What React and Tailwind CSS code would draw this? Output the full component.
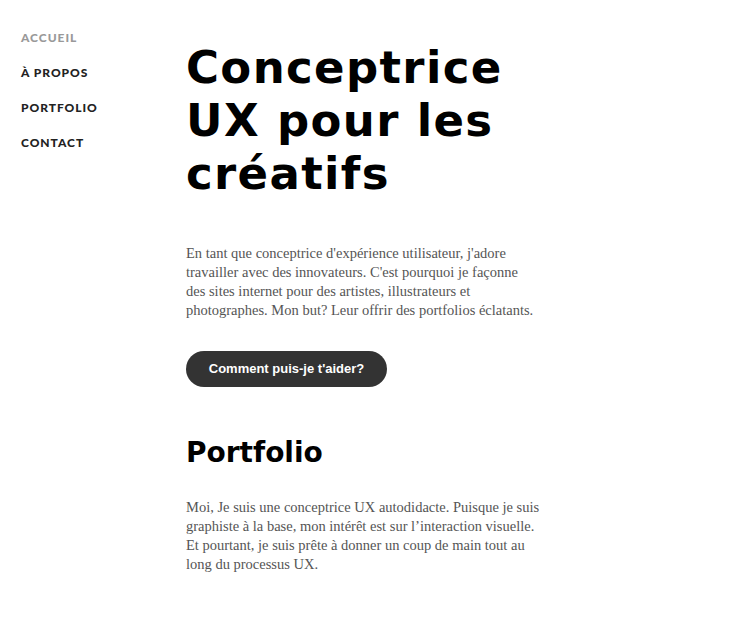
export default function App() {
    const nav = [
        { label: "ACCUEIL", active: true },
        { label: "À PROPOS" },
        { label: "PORTFOLIO" },
        { label: "CONTACT" },
    ];

    return (
        <div className="min-h-screen bg-white flex">
            {/* Side navigation */}
            <nav className="w-[186px] shrink-0 pl-[21px] pt-[31px]">
                <ul className="flex flex-col gap-[21px]">
                    {nav.map((item) => (
                        <li
                            key={item.label}
                            className={`font-['Lato',sans-serif] text-[12px] leading-[14px] font-black tracking-[0.08em] ${
                                item.active ? "text-[#999999]" : "text-[#222222]"
                            }`}
                        >
                            {item.label}
                        </li>
                    ))}
                </ul>
            </nav>

            {/* Main content */}
            <main className="w-[380px] pt-[41px]">
                <h1 className="font-['DejaVu_Sans',sans-serif] font-bold text-[45px] leading-[53px] text-black tracking-[0.03em]">
                    Conceptrice
                    <br />
                    UX pour les
                    <br />
                    créatifs
                </h1>

                <p className="mt-[44px] font-['Liberation_Serif',serif] text-[14.5px] leading-[19px] text-[#555555] whitespace-nowrap">
                    En tant que conceptrice d'expérience utilisateur, j'adore
                    <br />
                    travailler avec des innovateurs. C'est pourquoi je façonne
                    <br />
                    des sites internet pour des artistes, illustrateurs et
                    <br />
                    photographes. Mon but? Leur offrir des portfolios éclatants.
                </p>

                <button className="mt-[31px] h-[36px] w-[201px] rounded-full bg-[#333333] text-white font-['Liberation_Sans',sans-serif] font-bold text-[13px]">
                    Comment puis-je t'aider?
                </button>

                <h2 className="mt-[48px] font-['DejaVu_Sans',sans-serif] font-bold text-[28px] leading-[36px] text-black">
                    Portfolio
                </h2>

                <p className="mt-[27px] font-['Liberation_Serif',serif] text-[14.5px] leading-[19px] text-[#555555] whitespace-nowrap">
                    Moi, Je suis une conceptrice UX autodidacte. Puisque je suis
                    <br />
                    graphiste à la base, mon intérêt est sur l’interaction visuelle.
                    <br />
                    Et pourtant, je suis prête à donner un coup de main tout au
                    <br />
                    long du processus UX.
                </p>
            </main>
        </div>
    );
}
